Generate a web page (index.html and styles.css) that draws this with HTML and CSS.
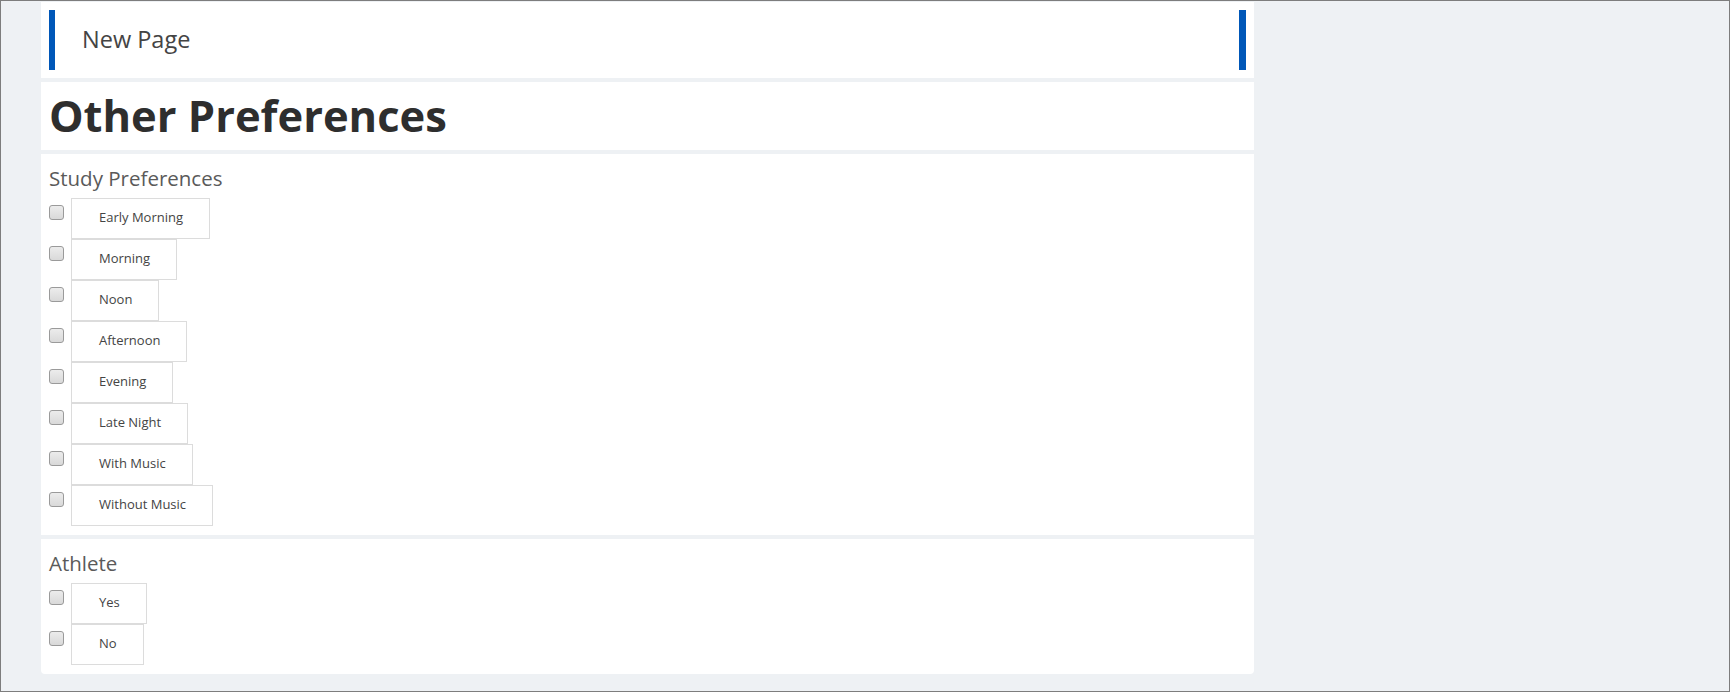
FILE: index.html
```html
<!DOCTYPE html>
<html lang="en">
<head>
<meta charset="utf-8">
<title>Other Preferences</title>
<link rel="stylesheet" href="styles.css">
</head>
<body>
<div class="page">
  <div class="panel header-panel">
    <div class="title-bar"><span class="page-name">New Page</span></div>
  </div>
  <div class="panel title-panel">
    <h1 class="page-title">Other Preferences</h1>
  </div>
  <div class="panel group">
    <h2 class="group-title">Study Preferences</h2>
    <ul class="options">
      <li class="option"><input type="checkbox" class="check"><span class="option-label">Early Morning</span></li>
      <li class="option"><input type="checkbox" class="check"><span class="option-label">Morning</span></li>
      <li class="option"><input type="checkbox" class="check"><span class="option-label">Noon</span></li>
      <li class="option"><input type="checkbox" class="check"><span class="option-label">Afternoon</span></li>
      <li class="option"><input type="checkbox" class="check"><span class="option-label">Evening</span></li>
      <li class="option"><input type="checkbox" class="check"><span class="option-label">Late Night</span></li>
      <li class="option"><input type="checkbox" class="check"><span class="option-label">With Music</span></li>
      <li class="option"><input type="checkbox" class="check"><span class="option-label">Without Music</span></li>
    </ul>
  </div>
  <div class="panel group last">
    <h2 class="group-title">Athlete</h2>
    <ul class="options">
      <li class="option"><input type="checkbox" class="check"><span class="option-label">Yes</span></li>
      <li class="option"><input type="checkbox" class="check"><span class="option-label">No</span></li>
    </ul>
  </div>
</div>
</body>
</html>
```
FILE: styles.css
```css
html, body {
  margin: 0;
  padding: 0;
}
body {
  width: 1730px;
  height: 692px;
  box-sizing: border-box;
  border: 1px solid #7d7d7d;
  background: #eef1f4;
  font-family: "Open Sans", "Liberation Sans", sans-serif;
  overflow: hidden;
}
.page {
  width: 1213px;
  margin-left: 40px;
  padding-top: 1px;
  display: flex;
  flex-direction: column;
  gap: 4px;
}
.panel {
  background: #ffffff;
}
.header-panel {
  padding: 8px;
}
.title-bar {
  height: 60px;
  border-left: 6px solid #0057b8;
  border-right: 7px solid #0057b8;
  display: flex;
  align-items: center;
  padding-left: 27px;
}
.page-name {
  font-size: 23.5px;
  color: #444;
  margin-bottom: 2px;
}
.title-panel {
  height: 68px;
  display: flex;
  align-items: center;
  padding-left: 8px;
}
.page-title {
  margin: 0;
  font-size: 43.5px;
  font-weight: 700;
  color: #2e2e2e;
  line-height: 1;
}
.group {
  padding: 10px 8px 9px 8px;
}
.group.last {
  border-radius: 0 0 4px 4px;
}
.group-title {
  margin: 0;
  font-size: 20.5px;
  font-weight: 400;
  color: #5a5a5a;
  line-height: 28px;
  padding-bottom: 6px;
}
.options {
  list-style: none;
  margin: 0;
  padding: 0;
}
.option {
  display: flex;
  align-items: flex-start;
}
.check {
  appearance: none;
  -webkit-appearance: none;
  width: 15px;
  height: 15px;
  margin: 7px 7px 0 0;
  box-sizing: border-box;
  border: 1px solid #9a9a9a;
  border-radius: 3px;
  background: linear-gradient(#ececec, #d9d9d9);
}
.option-label {
  height: 41px;
  box-sizing: border-box;
  border: 1px solid #dcdcdc;
  padding: 0 26px 3px 27px;
  display: flex;
  align-items: center;
  font-size: 13px;
  color: #444;
}
```
